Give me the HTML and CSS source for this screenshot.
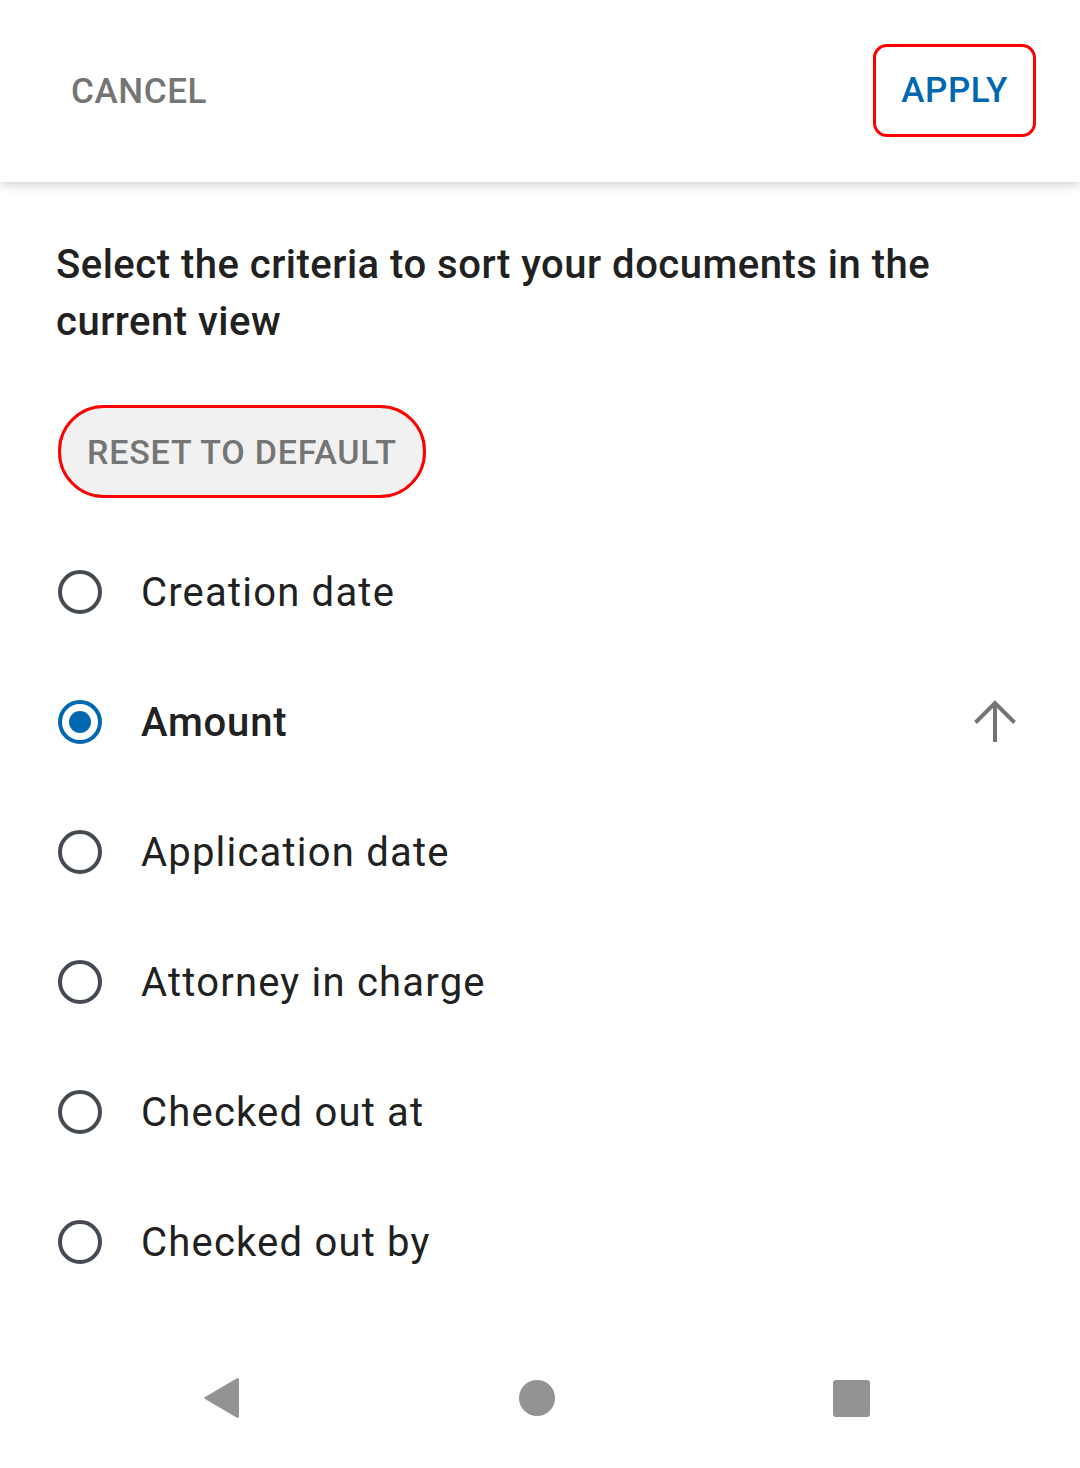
FILE: index.html
```html
<!DOCTYPE html>
<html>
<head>
    <title>Sort documents</title>
    <link rel="stylesheet" href="styles.css">
</head>
<body>
    <div class="screen">
        <div class="top-bar">
            <button class="text-button cancel">CANCEL</button>
            <button class="text-button apply">APPLY</button>
        </div>

        <div class="content">
            <p class="intro">Select the criteria to sort your documents in the current view</p>

            <button class="reset-button">RESET TO DEFAULT</button>

            <ul class="sort-list">
                <li class="sort-item">
                    <span class="radio"></span>
                    <span class="sort-label">Creation date</span>
                </li>
                <li class="sort-item selected">
                    <span class="radio"></span>
                    <span class="sort-label">Amount</span>
                    <svg class="direction" width="48" height="48" viewBox="0 0 48 48">
                        <path d="M24 44V7M4.5 24.5 24 5l19.5 19.5" fill="none" stroke="#757575" stroke-width="4"/>
                    </svg>
                </li>
                <li class="sort-item">
                    <span class="radio"></span>
                    <span class="sort-label">Application date</span>
                </li>
                <li class="sort-item">
                    <span class="radio"></span>
                    <span class="sort-label">Attorney in charge</span>
                </li>
                <li class="sort-item">
                    <span class="radio"></span>
                    <span class="sort-label">Checked out at</span>
                </li>
                <li class="sort-item">
                    <span class="radio"></span>
                    <span class="sort-label">Checked out by</span>
                </li>
            </ul>
        </div>

        <div class="nav-bar">
            <svg width="38" height="42" viewBox="0 0 38 42">
                <path d="M36 2.5v37a1.5 1.5 0 0 1-2.4 1.1L1.6 21.7a1 1 0 0 1 0-1.4L33.6 1.4A1.5 1.5 0 0 1 36 2.5z" fill="#939393"/>
            </svg>
            <svg width="36" height="36" viewBox="0 0 36 36">
                <circle cx="18" cy="18" r="18" fill="#939393"/>
            </svg>
            <svg width="37" height="37" viewBox="0 0 37 37">
                <rect x="0" y="0" width="37" height="37" rx="3" fill="#939393"/>
            </svg>
        </div>
    </div>
</body>
</html>
```

FILE: styles.css
```css
body {
    margin: 0;
    font-family: Roboto, "Liberation Sans", sans-serif;
    background-color: white;
}
.screen {
    height: 1468px;
    display: flex;
    flex-direction: column;
}
.top-bar {
    height: 182px;
    flex-shrink: 0;
    display: flex;
    align-items: center;
    justify-content: space-between;
    padding: 0 44px 0 42px;
    box-shadow: 0 3px 10px rgba(0,0,0,0.18);
    position: relative;
    z-index: 1;
    box-sizing: border-box;
}
.text-button {
    font-family: Roboto, "Liberation Sans", sans-serif;
    font-size: 35px;
    font-weight: 500;
    letter-spacing: 0.6px;
    background: none;
    border: 3px solid transparent;
    border-radius: 14px;
    height: 93px;
    padding: 0 26px;
    cursor: pointer;
}
.cancel {
    color: #757575;
}
.apply {
    color: #0068b0;
    border-color: #ff0000;
    margin-top: -2px;
    padding: 0 25px;
}
.content {
    flex: 1;
    padding: 54px 56px 0 56px;
}
.intro {
    margin: 0;
    font-size: 40px;
    font-weight: 500;
    line-height: 57px;
    color: #212121;
    letter-spacing: 0.5px;
}
.reset-button {
    margin-top: 55px;
    margin-left: 2px;
    height: 93px;
    padding: 0 26px;
    background-color: #f1f1f1;
    border: 3px solid #ff0000;
    border-radius: 46px;
    color: #757575;
    font-family: Roboto, "Liberation Sans", sans-serif;
    font-size: 34px;
    font-weight: 500;
    letter-spacing: 0.8px;
    cursor: pointer;
}
.sort-list {
    list-style: none;
    margin: 29px 0 0 0;
    padding: 0;
}
.sort-item {
    height: 130px;
    display: flex;
    align-items: center;
}
.radio {
    width: 44px;
    height: 44px;
    box-sizing: border-box;
    border: 4px solid #454b52;
    border-radius: 50%;
    margin-left: 2px;
    display: flex;
    align-items: center;
    justify-content: center;
}
.selected .radio {
    border-color: #0068b0;
}
.selected .radio::after {
    content: "";
    width: 22px;
    height: 22px;
    border-radius: 50%;
    background-color: #0068b0;
}
.sort-label {
    margin-left: 39px;
    font-size: 40px;
    letter-spacing: 1.2px;
    color: #212121;
    flex: 1;
}
.selected .sort-label {
    font-weight: 500;
    letter-spacing: 0.8px;
}
.direction {
    margin-right: 5px;
}
.nav-bar {
    height: 140px;
    flex-shrink: 0;
    display: flex;
    align-items: center;
    gap: 278px;
    padding-left: 203px;
}
```
